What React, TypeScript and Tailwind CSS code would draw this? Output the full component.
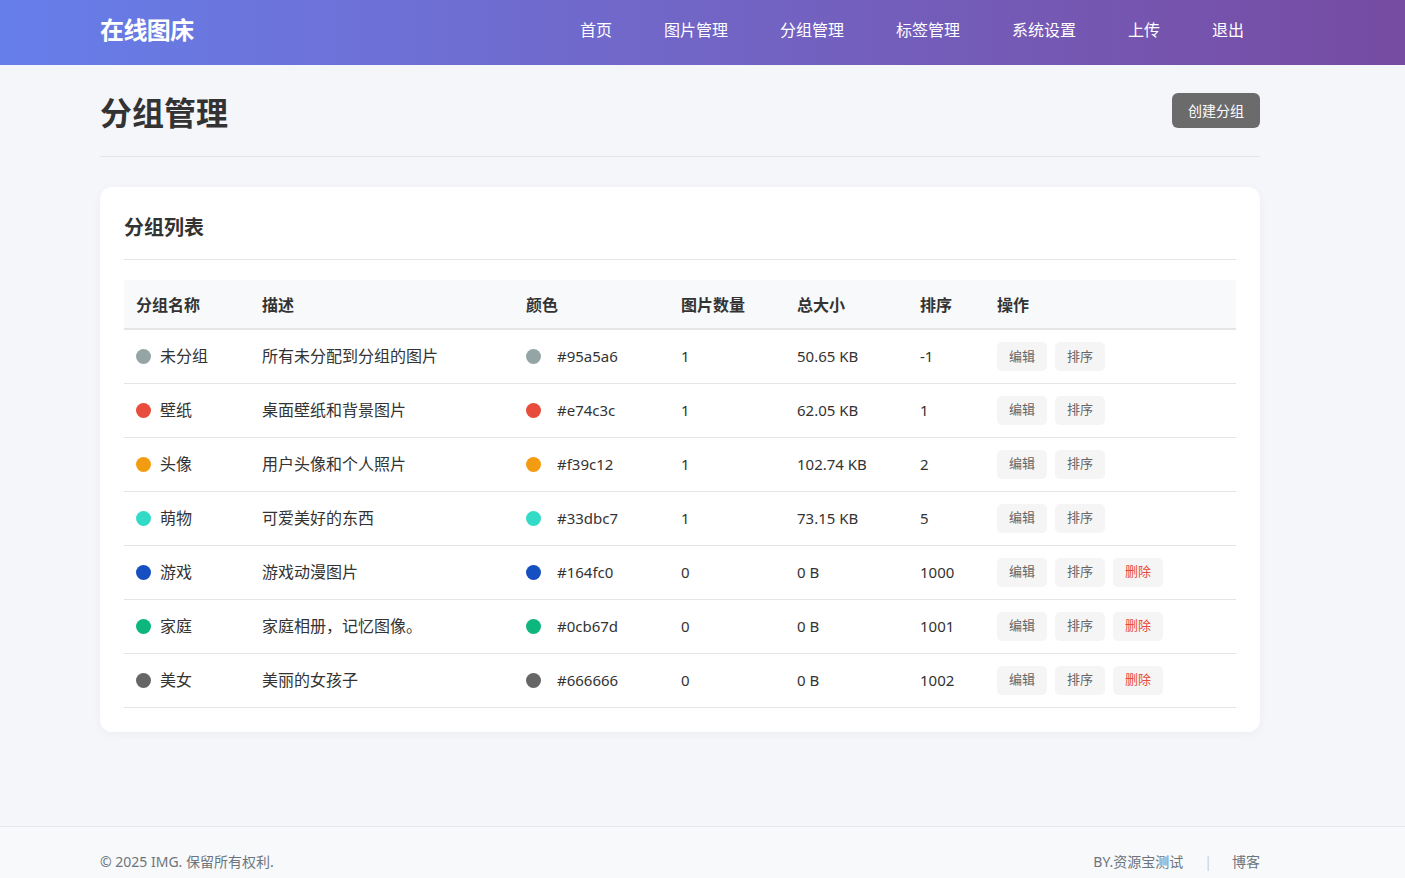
import React from 'react'

type Group = { name: string; desc: string; color: string; count: number; size: string; sort: number; deletable: boolean }

const groups: Group[] = [
  { name: '未分组', desc: '所有未分配到分组的图片', color: '#95a5a6', count: 1, size: '50.65 KB', sort: -1, deletable: false },
  { name: '壁纸', desc: '桌面壁纸和背景图片', color: '#e74c3c', count: 1, size: '62.05 KB', sort: 1, deletable: false },
  { name: '头像', desc: '用户头像和个人照片', color: '#f39c12', count: 1, size: '102.74 KB', sort: 2, deletable: false },
  { name: '萌物', desc: '可爱美好的东西', color: '#33dbc7', count: 1, size: '73.15 KB', sort: 5, deletable: false },
  { name: '游戏', desc: '游戏动漫图片', color: '#164fc0', count: 0, size: '0 B', sort: 1000, deletable: true },
  { name: '家庭', desc: '家庭相册，记忆图像。', color: '#0cb67d', count: 0, size: '0 B', sort: 1001, deletable: true },
  { name: '美女', desc: '美丽的女孩子', color: '#666666', count: 0, size: '0 B', sort: 1002, deletable: true },
]

const nav = ['首页', '图片管理', '分组管理', '标签管理', '系统设置', '上传', '退出']

export default function App() {
  return (
    <div className="min-h-screen bg-[#f5f6fa] text-[#333] flex flex-col" style={{ fontFamily: '"Noto Sans", "Noto Sans CJK SC", sans-serif' }}>
      <header className="h-[65px] bg-gradient-to-r from-[#667eea] to-[#764ba2]">
        <div className="w-[1160px] ml-[100px] h-full flex items-center justify-between pb-[6px]">
          <span className="text-white text-[24px] font-bold tracking-tight">在线图床</span>
          <nav className="flex gap-[52px] pr-4">
            {nav.map((n) => (
              <a key={n} className="text-white text-[16px] no-underline cursor-pointer">{n}</a>
            ))}
          </nav>
        </div>
      </header>

      <main className="flex-1 w-[1160px] ml-[100px] pt-[27px] pb-[94px]">
        <div className="flex items-start justify-between pb-[22px] border-b border-[#e3e4e8]">
          <h1 className="text-[32px] font-bold text-[#333] leading-[42px]">分组管理</h1>
          <button className="mt-[1px] bg-[#6b6b6b] text-white text-[14px] rounded-md px-4 h-[35px]">创建分组</button>
        </div>

        <div className="bg-white rounded-xl mt-[30px] px-6 pt-[26px] pb-6 shadow-[0_2px_10px_rgba(0,0,0,0.04)]">
          <h2 className="text-[20px] font-bold text-[#333] pb-4 border-b border-[#e5e5e5] leading-[30px]">分组列表</h2>
          <table className="w-full mt-5 border-collapse text-[16px]">
            <thead>
              <tr className="bg-[#f8f9fa] border-b-2 border-[#e5e5e5] text-left">
                <th className="w-[126px] h-[49px] pt-[2px] px-3 font-bold">分组名称</th>
                <th className="w-[264px] pt-[2px] px-3 font-bold">描述</th>
                <th className="w-[155px] pt-[2px] px-3 font-bold">颜色</th>
                <th className="w-[116px] pt-[2px] px-3 font-bold">图片数量</th>
                <th className="w-[123px] pt-[2px] px-3 font-bold">总大小</th>
                <th className="w-[77px] pt-[2px] px-3 font-bold">排序</th>
                <th className="pt-[2px] px-3 font-bold">操作</th>
              </tr>
            </thead>
            <tbody>
              {groups.map((g) => (
                <tr key={g.name} className="border-b border-[#e5e5e5]">
                  <td className="h-[54px] px-3">
                    <div className="flex items-center gap-[9px]">
                      <span className="w-[15px] h-[15px] rounded-full" style={{ backgroundColor: g.color }} />
                      {g.name}
                    </div>
                  </td>
                  <td className="px-3">{g.desc}</td>
                  <td className="px-3">
                    <div className="flex items-center gap-4">
                      <span className="w-[15px] h-[15px] rounded-full" style={{ backgroundColor: g.color }} />
                      <span className="text-[15px]">{g.color}</span>
                    </div>
                  </td>
                  <td className="px-3 text-[15px]">{g.count}</td>
                  <td className="px-3 text-[15px]">{g.size}</td>
                  <td className="px-3 text-[15px]">{g.sort}</td>
                  <td className="px-3">
                    <div className="flex gap-2">
                      <button className="w-[50px] h-[29px] rounded-[5px] bg-[#f5f5f5] text-[#666] text-[13px]">编辑</button>
                      <button className="w-[50px] h-[29px] rounded-[5px] bg-[#f5f5f5] text-[#666] text-[13px]">排序</button>
                      {g.deletable && (
                        <button className="w-[50px] h-[29px] rounded-[5px] bg-[#f5f5f5] text-[#e74c3c] text-[13px]">删除</button>
                      )}
                    </div>
                  </td>
                </tr>
              ))}
            </tbody>
          </table>
        </div>
      </main>

      <footer className="bg-[#f8f9fb] border-t border-[#e6e7eb]">
        <div className="w-[1160px] ml-[100px] flex justify-between items-center pt-6 pb-6 text-[14px] text-[#6c757d]">
          <span>© 2025 IMG. 保留所有权利.</span>
          <div className="flex items-center">
            <span>BY.资源宝测试</span>
            <span className="ml-[21px] mr-5 text-[#ccd]">|</span>
            <span>博客</span>
          </div>
        </div>
      </footer>
    </div>
  )
}
